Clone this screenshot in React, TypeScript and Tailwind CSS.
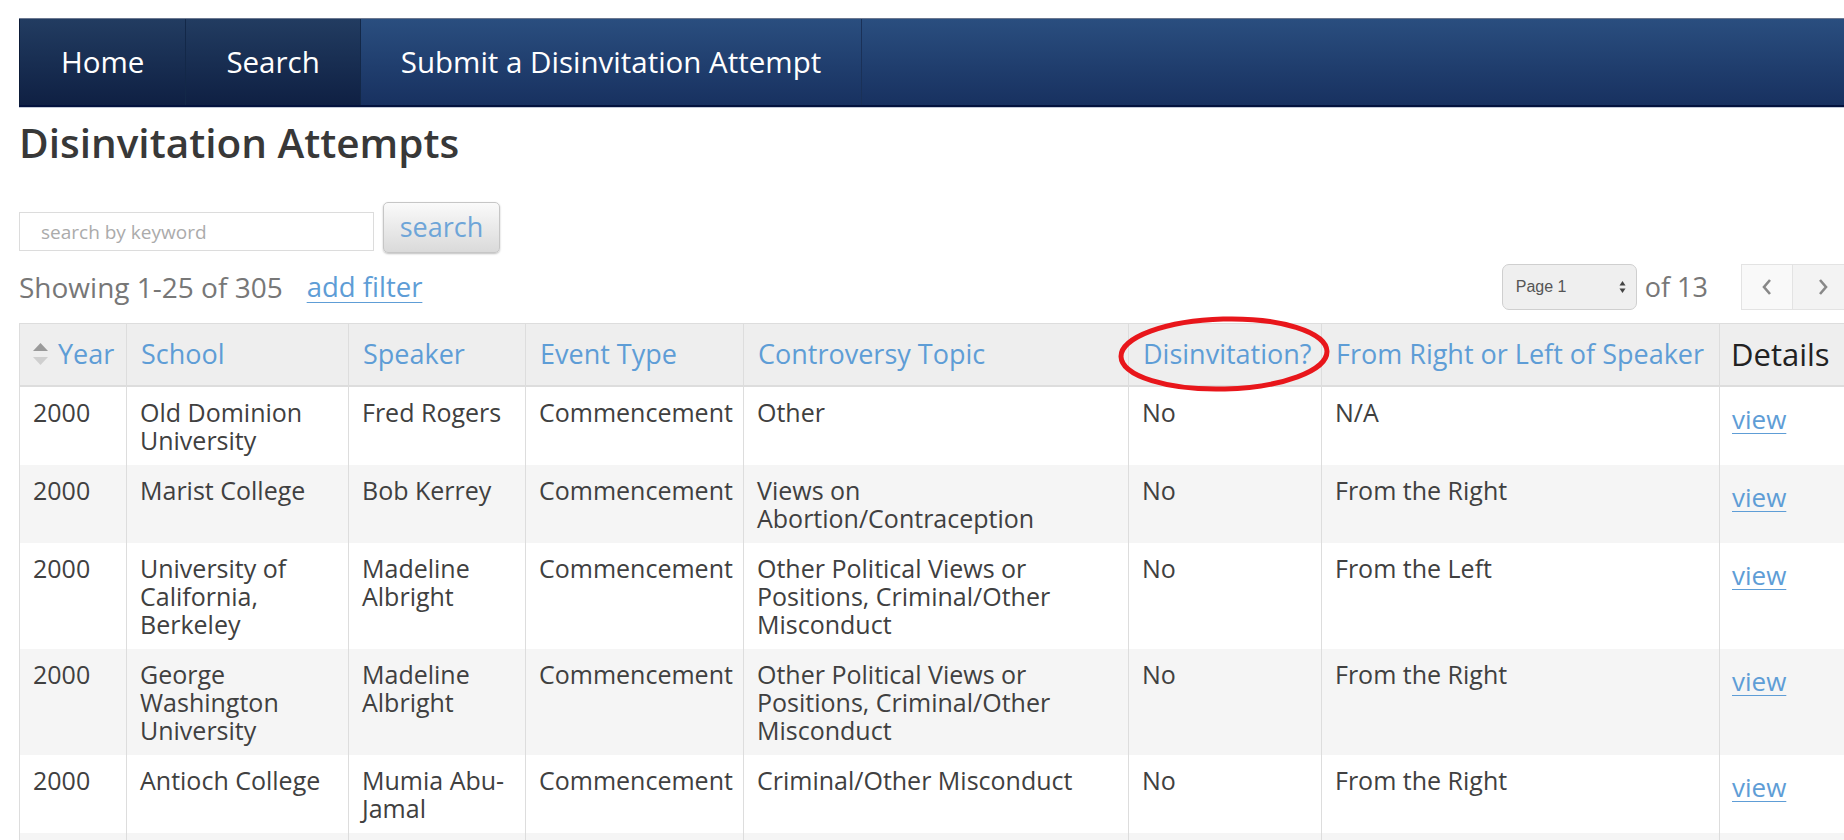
import React from 'react';

type Row = {
  year: string;
  school: string;
  speaker: string;
  event: string;
  topic: string;
  dis: string;
  side: string;
};

const rows: Row[] = [
  { year: '2000', school: 'Old Dominion University', speaker: 'Fred Rogers', event: 'Commencement', topic: 'Other', dis: 'No', side: 'N/A' },
  { year: '2000', school: 'Marist College', speaker: 'Bob Kerrey', event: 'Commencement', topic: 'Views on Abortion/Contraception', dis: 'No', side: 'From the Right' },
  { year: '2000', school: 'University of California, Berkeley', speaker: 'Madeline Albright', event: 'Commencement', topic: 'Other Political Views or Positions, Criminal/Other Misconduct', dis: 'No', side: 'From the Left' },
  { year: '2000', school: 'George Washington University', speaker: 'Madeline Albright', event: 'Commencement', topic: 'Other Political Views or Positions, Criminal/Other Misconduct', dis: 'No', side: 'From the Right' },
  { year: '2000', school: 'Antioch College', speaker: 'Mumia Abu-Jamal', event: 'Commencement', topic: 'Criminal/Other Misconduct', dis: 'No', side: 'From the Right' },
];

const headers = ['School', 'Speaker', 'Event Type', 'Controversy Topic', 'Disinvitation?', 'From Right or Left of Speaker'];

const App = () => {
  return (
    <div className="relative w-[1844px] h-[840px] overflow-hidden bg-white font-['Open_Sans',sans-serif] text-[#404040]">
      <div className="w-[1900px] pl-[19px] pt-[18px]">
        {/* top navigation */}
        <nav className="flex h-[89px] border-t border-b-2 border-t-[#6b7890] border-b-[#03123d] bg-gradient-to-b from-[#2a4e7f] to-[#183160] shadow-[0_1px_0_#c3cad8]">
          <a className="flex items-center px-[41px] border-l border-r border-l-[#0d1c38] border-r-[#132848] bg-gradient-to-b from-[#223c61] to-[#0f2043] text-[29.5px] text-white">
            Home
          </a>
          <a className="flex items-center px-[40px] border-r border-[#132848] bg-gradient-to-b from-[#223c61] to-[#0f2043] text-[29.5px] text-white">
            Search
          </a>
          <a className="flex items-center px-[40px] border-r border-[#1a3158] text-[29.5px] text-white">
            Submit a Disinvitation Attempt
          </a>
        </nav>

        <h1 className="mt-[16px] text-[40.5px] leading-[40px] font-semibold text-[#383838]">Disinvitation Attempts</h1>

        <div className="mt-[39px] flex items-end gap-[9px]">
          <input
            className="mb-[2px] h-[39px] w-[355px] border border-[#dcdcdc] pl-[21px] text-[19px] text-[#555] placeholder:text-[#ababab] outline-none"
            placeholder="search by keyword"
          />
          <button className="h-[51px] w-[117px] rounded-[5px] border border-[#c6c6c6] bg-gradient-to-b from-[#fafafa] to-[#dadada] text-[27px] text-[#6ea5d8] shadow-[0_1px_2px_rgba(0,0,0,0.25)]">
            search
          </button>
        </div>

        <div className="mt-[11px] flex h-[46px] w-[1834px] items-center">
          <span className="text-[28px] text-[#777]">Showing 1-25 of 305</span>
          <a className="ml-[24px] text-[27.5px] text-[#5e9dd6] underline underline-offset-[5px] decoration-1">add filter</a>
          <div className="ml-auto flex items-center">
            <div className="flex h-[46px] w-[135px] items-center justify-between rounded-[7px] border border-[#cfcfcf] bg-[#efefef] pl-[13px] pr-[10px] font-['Liberation_Sans',sans-serif] text-[16px] text-[#555]">
              <span>Page 1</span>
              <svg width="7" height="14" viewBox="0 0 7 14">
                <path d="M3.5 1 L6.5 5.5 L0.5 5.5 Z" fill="#444" />
                <path d="M3.5 13 L6.5 8.5 L0.5 8.5 Z" fill="#444" />
              </svg>
            </div>
            <span className="ml-[8px] text-[27px] text-[#777]">of 13</span>
            <div className="ml-[33px] flex h-[46px]">
              <div className="flex w-[52px] items-center justify-center border border-[#e3e3e3] bg-[#f9f9f9]">
                <svg width="12" height="18" viewBox="0 0 12 18">
                  <polyline points="9,2 3,9 9,16" fill="none" stroke="#888" strokeWidth="2.6" />
                </svg>
              </div>
              <div className="flex w-[60px] items-center justify-center border border-l-0 border-[#e3e3e3] bg-[#f3f3f3]">
                <svg width="12" height="18" viewBox="0 0 12 18">
                  <polyline points="3,2 9,9 3,16" fill="none" stroke="#888" strokeWidth="2.6" />
                </svg>
              </div>
            </div>
          </div>
        </div>

        <table className="mt-[13px] w-[1880px] table-fixed border-collapse border-t border-[#dddddd]">
          <colgroup>
            <col className="w-[107px]" />
            <col className="w-[222px]" />
            <col className="w-[177px]" />
            <col className="w-[218px]" />
            <col className="w-[385px]" />
            <col className="w-[193px]" />
            <col className="w-[398px]" />
            <col className="w-[180px]" />
          </colgroup>
          <thead>
            <tr className="h-[62px] bg-[#eeeeee] border-b-2 border-[#dddddd]">
              <th className="border-l border-[#dddddd] pl-[13px] text-left font-normal">
                <span className="flex items-center gap-[10px] whitespace-nowrap text-[27px] leading-[28px] text-[#5e9dd6]">
                  <svg width="15" height="22" viewBox="0 0 15 22">
                    <path d="M7.5 0 L15 8 L0 8 Z" fill="#9a9a9a" />
                    <path d="M7.5 22 L15 14 L0 14 Z" fill="#cfcfcf" />
                  </svg>
                  Year
                </span>
              </th>
              {headers.map((h) => (
                <th key={h} className="border-l border-[#dddddd] pl-[14px] text-left font-normal whitespace-nowrap text-[27px] leading-[28px] text-[#5e9dd6]">
                  {h}
                </th>
              ))}
              <th className="border-l border-[#dddddd] pl-[11px] text-left font-normal text-[31px] leading-[28px] text-[#222]">Details</th>
            </tr>
          </thead>
          <tbody>
            {rows.map((r, i) => (
              <tr key={i} className={i % 2 === 1 ? 'bg-[#f5f5f5]' : 'bg-white'}>
                {[r.year, r.school, r.speaker, r.event, r.topic, r.dis, r.side].map((c, j) => (
                  <td key={j} className="border-l border-[#dddddd] px-[13px] py-[11px] align-top text-[25px] leading-[28px]">
                    {c}
                  </td>
                ))}
                <td className="border-l border-[#dddddd] px-[12px] py-[11px] align-top">
                  <a className="block pt-[7px] text-[26px] leading-[28px] text-[#5e9dd6] underline underline-offset-[4px] decoration-1">view</a>
                </td>
              </tr>
            ))}
            {/* next striped row, only its top edge is in view */}
            <tr className="h-[78px] bg-[#f5f5f5]">
              {[0, 1, 2, 3, 4, 5, 6, 7].map((k) => (
                <td key={k} className="border-l border-[#dddddd]" />
              ))}
            </tr>
          </tbody>
        </table>
      </div>

      {/* hand-drawn red circle annotation */}
      <svg className="absolute left-[1110px] top-[306px]" width="236" height="96" viewBox="0 0 236 96">
        <ellipse cx="114" cy="48" rx="103" ry="35" fill="none" stroke="#e8161b" strokeWidth="5" transform="rotate(-1.5 114 48)" />
      </svg>
    </div>
  );
};

export default App;
